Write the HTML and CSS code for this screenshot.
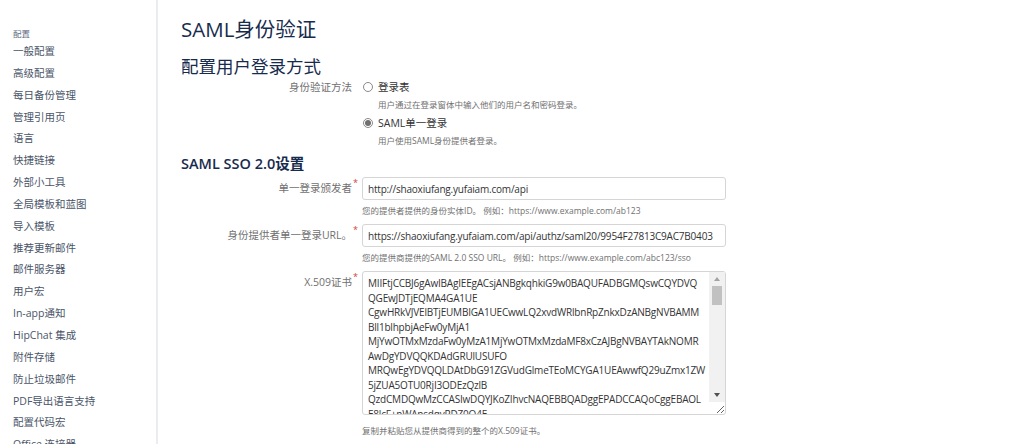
FILE: index.html
```html
<!DOCTYPE html>
<html lang="zh-CN">
<head>
  <meta charset="UTF-8">
  <meta name="viewport" content="width=device-width, initial-scale=1.0">
  <title>SAML身份验证</title>
  <link rel="stylesheet" href="styles.css">
</head>
<body>
  <div class="page">
    <div class="sidebar">
      <div class="side-head">配置</div>
      <ul class="side-nav">
        <li>一般配置</li>
        <li>高级配置</li>
        <li>每日备份管理</li>
        <li>管理引用页</li>
        <li>语言</li>
        <li>快捷链接</li>
        <li>外部小工具</li>
        <li>全局模板和蓝图</li>
        <li>导入模板</li>
        <li>推荐更新邮件</li>
        <li>邮件服务器</li>
        <li>用户宏</li>
        <li>In-app通知</li>
        <li>HipChat 集成</li>
        <li>附件存储</li>
        <li>防止垃圾邮件</li>
        <li>PDF导出语言支持</li>
        <li>配置代码宏</li>
        <li>Office 连接器</li>
      </ul>
    </div>

    <div class="content">
      <h1>SAML身份验证</h1>
      <h2>配置用户登录方式</h2>

      <div class="row">
        <div class="label">身份验证方法</div>
        <div class="field">
          <label class="radio"><input type="radio" name="method"> 登录表</label>
          <div class="desc">用户通过在登录窗体中输入他们的用户名和密码登录。</div>
          <label class="radio"><input type="radio" name="method" checked> SAML单一登录</label>
          <div class="desc">用户使用SAML身份提供者登录。</div>
        </div>
      </div>

      <h3>SAML SSO 2.0设置</h3>

      <div class="row row-input">
        <div class="label">单一登录颁发者<span class="req">*</span></div>
        <div class="field">
          <input class="text" type="text" value="http://shaoxiufang.yufaiam.com/api">
          <div class="desc">您的提供者提供的身份实体ID。 例如：https://www.example.com/ab123</div>
        </div>
      </div>

      <div class="row row-input">
        <div class="label">身份提供者单一登录URL。<span class="req">*</span></div>
        <div class="field">
          <input class="text" type="text" value="https://shaoxiufang.yufaiam.com/api/authz/saml20/9954F27813C9AC7B0403">
          <div class="desc">您的提供商提供的SAML 2.0 SSO URL。 例如：https://www.example.com/abc123/sso</div>
        </div>
      </div>

      <div class="row row-area">
        <div class="label">X.509证书<span class="req">*</span></div>
        <div class="field">
          <div class="cert-box">
            <textarea class="cert">MIIFtjCCBJ6gAwIBAgIEEgACsjANBgkqhkiG9w0BAQUFADBGMQswCQYDVQ
QGEwJDTjEQMA4GA1UE
CgwHRkVJVElBTjEUMBIGA1UECwwLQ2xvdWRlbnRpZnkxDzANBgNVBAMM
Bll1blhpbjAeFw0yMjA1
MjYwOTMxMzdaFw0yMzA1MjYwOTMxMzdaMF8xCzAJBgNVBAYTAkNOMR
AwDgYDVQQKDAdGRUlUSUFO
MRQwEgYDVQQLDAtDbG91ZGVudGlmeTEoMCYGA1UEAwwfQ29uZmx1ZW
5jZUA5OTU0RjI3ODEzQzlB
QzdCMDQwMzCCASIwDQYJKoZIhvcNAQEBBQADggEPADCCAQoCggEBAOL
E8lcF+nWAnsdqvRDZ0Q4E
hM2pXq7vKc3LwYtN0aBfGdE8sJkLmNoPqRsTuVwXyZ12345678
cdEfGhIjKlMnOpQrStUv</textarea>
            <div class="scrollbar">
              <span class="sb-arrow up"></span>
              <span class="sb-thumb"></span>
              <span class="sb-arrow down"></span>
            </div>
          </div>
          <div class="desc">复制并粘贴您从提供商得到的整个的X.509证书。</div>
        </div>
      </div>
    </div>
  </div>
</body>
</html>
```

FILE: styles.css
```css
* {
  margin: 0;
  padding: 0;
  box-sizing: border-box;
}

body {
  background: #fff;
  font-family: "Open Sans", "Noto Sans CJK SC", sans-serif;
  font-size: 10.5px;
  color: #333;
}

.page {
  display: flex;
  height: 444px;
  overflow: hidden;
}

/* left nav */
.sidebar {
  width: 158px;
  flex-shrink: 0;
  border-right: 2px solid #ebecf0;
  padding: 27px 0 0 13px;
}

.side-head {
  font-size: 8.5px;
  color: #5e6c84;
  line-height: 14px;
}

.side-nav {
  list-style: none;
}

.side-nav li {
  line-height: 21.85px;
  color: #4a5568;
}

/* main */
.content {
  padding-left: 23px;
  width: 600px;
}

h1 {
  font-size: 20.5px;
  font-weight: 400;
  line-height: 24px;
  color: #172b4d;
  margin-top: 17px;
}

h2 {
  font-size: 17.5px;
  font-weight: 400;
  line-height: 22px;
  color: #172b4d;
  margin-top: 14px;
  margin-bottom: 1px;
}

h3 {
  font-size: 14.5px;
  font-weight: 600;
  line-height: 18px;
  color: #172b4d;
  margin-top: 5px;
  margin-bottom: 4px;
}

.row {
  display: flex;
}

.label {
  width: 181px;
  flex-shrink: 0;
  text-align: right;
  padding-right: 10px;
  color: #707070;
  line-height: 18px;
}

.req {
  color: #d04437;
  font-size: 9px;
  vertical-align: top;
  margin-right: -6px;
  margin-left: 1px;
  line-height: 12px;
}

.field {
  width: 364px;
}

.radio {
  display: flex;
  align-items: center;
  line-height: 18px;
  color: #333;
  padding-left: 1px;
}

.radio input {
  appearance: none;
  width: 10px;
  height: 10px;
  border: 1px solid #8a8a8a;
  border-radius: 50%;
  margin-right: 5px;
  display: grid;
  place-content: center;
}

.radio input:checked::before {
  content: "";
  width: 6px;
  height: 6px;
  border-radius: 50%;
  background: #707070;
}

.desc {
  font-size: 8.5px;
  color: #707070;
  line-height: 18px;
}

.row .radio + .desc {
  padding-left: 16px;
}

.row-input .label {
  line-height: 23px;
}

.text {
  display: block;
  width: 364px;
  height: 23px;
  border: 1px solid #d5d5d5;
  border-radius: 3px;
  padding: 0 5px;
  font-family: inherit;
  font-size: 10px;
  letter-spacing: -0.2px;
  color: #333;
  outline: none;
}

.row-input .desc {
  margin-top: 2px;
  margin-bottom: 4px;
}

.row-area .label {
  line-height: 22px;
}

.cert-box {
  position: relative;
  width: 364px;
}

.cert {
  display: block;
  width: 364px;
  height: 144px;
  border: 1px solid #d5d5d5;
  border-radius: 3px;
  padding: 4px 18px 4px 5px;
  font-family: inherit;
  font-size: 10px;
  letter-spacing: -0.2px;
  line-height: 14.5px;
  color: #333;
  white-space: pre;
  overflow: hidden;
  resize: vertical;
  outline: none;
}

/* fake scrollbar drawn over the textarea */
.scrollbar {
  position: absolute;
  top: 1px;
  right: 1px;
  width: 16px;
  height: 130px;
  background: #f1f1f1;
  display: flex;
  flex-direction: column;
  align-items: center;
}

.sb-arrow {
  width: 16px;
  height: 14px;
  display: flex;
  align-items: center;
  justify-content: center;
}

.sb-arrow::before {
  content: "";
  border-left: 3.5px solid transparent;
  border-right: 3.5px solid transparent;
}

.sb-arrow.up::before {
  border-bottom: 4px solid #a3a3a3;
}

.sb-arrow.down {
  margin-top: auto;
}

.sb-arrow.down::before {
  border-top: 4px solid #505050;
}

.sb-thumb {
  width: 10px;
  height: 19px;
  background: #c1c1c1;
}

.row-area .desc {
  margin-top: 7px;
}
```
